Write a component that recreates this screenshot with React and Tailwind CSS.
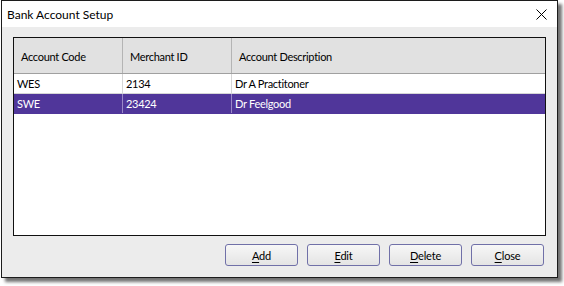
const columns = [
  { key: 'code', title: 'Account Code', width: 'w-[109px]' },
  { key: 'merchant', title: 'Merchant ID', width: 'w-[109px]' },
  { key: 'desc', title: 'Account Description', width: 'flex-1' },
];

const rows = [
  { code: 'WES', merchant: '2134', desc: 'Dr A Practitoner' },
  { code: 'SWE', merchant: '23424', desc: 'Dr Feelgood', selected: true },
];

const buttons = ['Add', 'Edit', 'Delete', 'Close'];

function DialogButton({ label }) {
  return (
    <button className="w-[73px] h-[22px] rounded-[3px] border border-[#7070a8] bg-gradient-to-b from-[#f7f7f7] to-[#e4e4e4] text-[11px] tracking-[-0.2px] leading-none text-black">
      <span className="underline underline-offset-2">{label[0]}</span>
      {label.slice(1)}
    </button>
  );
}

export default function App() {
  return (
    <div className="w-[564px] h-[286px] bg-white font-['Lato',sans-serif] text-[11px] tracking-[-0.3px] text-black">
      <div className="ml-px w-[557px] h-[278px] border border-[#1c1c1c] bg-[#ececec] flex flex-col shadow-[4px_4px_3px_rgba(0,0,0,0.55)]">
        <div className="h-[26px] bg-white flex items-center justify-between pl-[5px] pr-[10px]">
          <span className="text-[12px] tracking-normal pt-px">Bank Account Setup</span>
          <svg width="11" height="11" viewBox="0 0 11 11" className="text-black">
            <path d="M0.5 0.5 L10.5 10.5 M10.5 0.5 L0.5 10.5" stroke="currentColor" strokeWidth="1" />
          </svg>
        </div>

        <div className="ml-[11px] mr-[11px] mt-[10px] h-[199px] border border-[#111] bg-white flex flex-col">
          <div className="h-[36px] flex bg-[#e1e1e1] border-b border-[#a0a0a0]">
            {columns.map((c, i) => (
              <div
                key={c.key}
                className={`${c.width} flex items-center pl-[7px] pt-[3px] ${i < 2 ? 'border-r border-[#b4b4b4]' : ''}`}
              >
                {c.title}
              </div>
            ))}
          </div>
          {rows.map((r) => (
            <div
              key={r.code}
              className={`h-[20px] flex border-b ${r.selected ? 'bg-[#50369a] text-white border-[#50369a]' : 'border-[#d6d6d6]'}`}
            >
              {columns.map((c, i) => (
                <div
                  key={c.key}
                  className={`${c.width} flex items-center pl-[3px] pt-px ${i < 2 ? (r.selected ? 'border-r border-[#9a88c8]' : 'border-r border-[#d6d6d6]') : ''}`}
                >
                  {r[c.key]}
                </div>
              ))}
            </div>
          ))}
        </div>

        <div className="mt-[8px] mr-[13px] flex justify-end gap-[9px]">
          {buttons.map((b) => (
            <DialogButton key={b} label={b} />
          ))}
        </div>
      </div>
    </div>
  );
}
